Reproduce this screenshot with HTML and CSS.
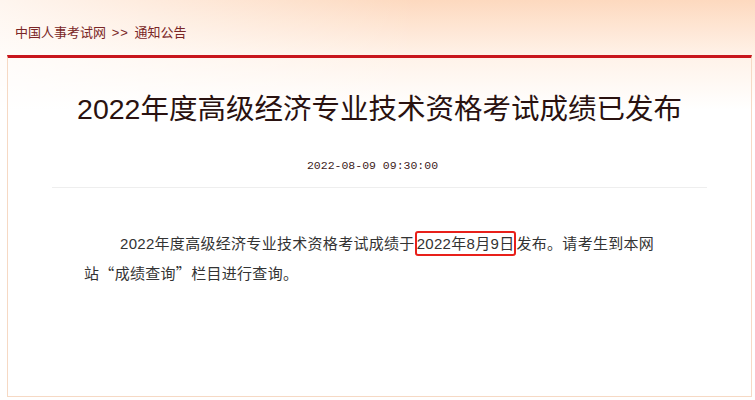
FILE: index.html
```html
<!DOCTYPE html>
<html lang="zh-CN">
<head>
  <meta charset="UTF-8">
  <meta name="viewport" content="width=device-width, initial-scale=1.0">
  <title>2022年度高级经济专业技术资格考试成绩已发布</title>
  <link rel="stylesheet" href="styles.css">
</head>
<body>
  <nav class="crumbs">
    <a href="#">中国人事考试网</a> <span class="sep">&gt;&gt;</span> <a href="#">通知公告</a>
  </nav>

  <article class="notice">
    <h1 class="notice-title">2022年度高级经济专业技术资格考试成绩已发布</h1>
    <div class="notice-date">2022-08-09 09:30:00</div>

    <div class="notice-body">
      <p>2022年度高级经济专业技术资格考试成绩于<span class="mark">2022年8月9日</span>发布。请考生到本网站<span class="cjk">“</span>成绩查询<span class="cjk">”</span>栏目进行查询。</p>
    </div>
  </article>
</body>
</html>
```

FILE: styles.css
```css
html, body {
  margin: 0;
  height: 100%;
}

body {
  font-family: "Liberation Sans", "Noto Sans CJK SC", sans-serif;
  background:
    linear-gradient(to right, rgba(255, 255, 255, 0.75), rgba(255, 255, 255, 0) 55%),
    linear-gradient(to bottom, #fdd9bf 0, #fff2e8 55px, #fff 110px);
  background-repeat: no-repeat;
  background-color: #fff;
}

.crumbs {
  height: 55px;
  box-sizing: border-box;
  padding: 22px 0 0 15px;
  font-size: 13px;
  color: #7a2626;
}

.crumbs a {
  color: #7a2626;
  text-decoration: none;
}

.crumbs .sep {
  margin: 0 2px;
  letter-spacing: 1px;
}

.notice {
  margin: 0 3px 0 7px;
  height: 342px;
  box-sizing: border-box;
  border: 1px solid #f6d9c4;
  border-top: 3px solid #c8161d;
}

.notice-title {
  margin: 0;
  padding-top: 34px;
  text-align: center;
  font-size: 28.5px;
  font-weight: normal;
  line-height: 34px;
  color: #2a1210;
}

.notice-date {
  margin: 33px 44px 0 44px;
  padding: 0 14px 15px 0;
  text-align: center;
  font-family: "Liberation Mono", "Noto Sans CJK SC", monospace;
  font-size: 11.5px;
  color: #3d1b1b;
  border-bottom: 1px solid #eeeeee;
}

.notice-body {
  padding: 41px 84px 0 76px;
  font-size: 15px;
  color: #333;
}

.notice-body p {
  margin: 0;
  text-indent: 36px;
  line-height: 29px;
  letter-spacing: 0.3px;
}

.cjk {
  font-family: "Noto Sans CJK SC", sans-serif;
}

.mark {
  border: 2px solid #e8201a;
  border-radius: 3px;
  padding: 2px 0;
}
```
